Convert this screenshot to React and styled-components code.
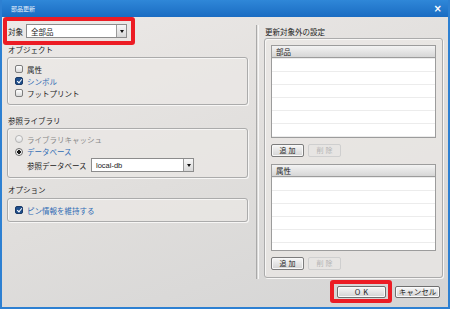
import styled, { createGlobalStyle } from "styled-components";

const GlobalStyle = createGlobalStyle`
  html, body {
    margin: 0;
    padding: 0;
    background: #ffffff;
  }
  body {
    font-family: "Noto Sans CJK JP", "Noto Sans", sans-serif;
  }
`;

const Window = styled.div`
  width: 450px;
  height: 309px;
  box-sizing: border-box;
  display: flex;
  flex-direction: column;
  border: 2px solid #2d80d2;
  border-top: none;
  overflow: hidden;
`;

const TitleBar = styled.div`
  height: 17px;
  margin: 0 -2px;
  flex-shrink: 0;
  display: flex;
  align-items: center;
  justify-content: space-between;
  padding: 0 8px 0 11px;
  background: linear-gradient(#2f87d8, #1a6cc2);
  color: #e9f2fb;
  font-size: 6px;
`;

const Close = styled.span`
  font-family: "DejaVu Sans", sans-serif;
  font-size: 10px;
  font-weight: bold;
  color: #ffffff;
`;

const Body = styled.div`
  flex: 1;
  display: flex;
  flex-direction: column;
  background: linear-gradient(160deg, #ece9e7 0%, #e0dedc 50%, #d4d4d4 100%);
  font-size: 7.5px;
  color: #222;
`;

const Main = styled.div`
  height: 262px;
  display: flex;
`;

const LeftCol = styled.div`
  width: 241px;
  margin-left: 5px;
  display: flex;
  flex-direction: column;
`;

const TargetRow = styled.div`
  width: 132px;
  height: 28px;
  box-sizing: border-box;
  margin-left: -4px;
  border: 4px solid #ec1c24;
  border-radius: 3px;
  display: flex;
  align-items: center;
  gap: 3px;
  padding-left: 1px;
`;

const Combo = styled.div`
  width: ${(p) => p.w}px;
  height: 14px;
  box-sizing: border-box;
  border: 1px solid #8c8c8c;
  background: #ffffff;
  display: flex;
  align-items: center;
  justify-content: space-between;
  padding-left: 4px;
  font-family: ${(p) => (p.latin ? '"Liberation Sans", "Noto Sans CJK JP", sans-serif' : "inherit")};
`;

const DropButton = styled.div`
  width: 10px;
  height: 12px;
  box-sizing: border-box;
  border-left: 1px solid #9a9a9a;
  background: linear-gradient(#f6f6f6, #d8d8d8);
  display: flex;
  align-items: center;
  justify-content: center;
  &::after {
    content: "";
    border-left: 2.5px solid transparent;
    border-right: 2.5px solid transparent;
    border-top: 3px solid #111;
  }
`;

const SectionLabel = styled.div`
  height: 10px;
  line-height: 10px;
  margin-top: ${(p) => p.mt || 0}px;
  margin-bottom: ${(p) => p.mb || 2}px;
  padding-left: ${(p) => p.pl || 1}px;
`;

const Group = styled.div`
  height: ${(p) => p.h}px;
  box-sizing: border-box;
  border: 1px solid #ababab;
  border-radius: 3px;
  box-shadow: inset 1px 1px 0 #f7f6f5, 1px 1px 0 #f7f6f5;
  background: rgba(235, 232, 230, 0.7);
  padding: ${(p) => p.pad || "4px 7px"};
  display: flex;
  flex-direction: column;
`;

const OptionRow = styled.div`
  height: ${(p) => p.h || 13}px;
  display: flex;
  align-items: center;
  gap: 4px;
  padding-left: ${(p) => p.indent || 0}px;
  color: ${(p) => (p.tone === "blue" ? "#2e6bb4" : p.tone === "gray" ? "#8a8a8a" : "#222")};
`;

const CheckBox = styled.span`
  width: 8px;
  height: 8px;
  box-sizing: border-box;
  border: 1px solid ${(p) => (p.on ? "#1b3a66" : "#7d7d7d")};
  border-radius: 2px;
  background: ${(p) => (p.on ? "#1f4f8c" : "linear-gradient(#ffffff, #d9d9d9)")};
  position: relative;
  &::after {
    content: "";
    display: ${(p) => (p.on ? "block" : "none")};
    position: absolute;
    left: 1.5px;
    top: 0px;
    width: 2px;
    height: 4px;
    border-right: 1.3px solid #fff;
    border-bottom: 1.3px solid #fff;
    transform: rotate(40deg);
  }
`;

const Radio = styled.span`
  width: 8px;
  height: 8px;
  box-sizing: border-box;
  border-radius: 50%;
  border: 1px solid ${(p) => (p.on ? "#6d6d6d" : "#b4b4b4")};
  background: ${(p) =>
    p.on ? "radial-gradient(circle, #1a1a1a 0 1.6px, #f2f2f2 2px)" : "linear-gradient(#fafafa, #e0e0e0)"};
`;

const DbLabel = styled.span`
  width: 60px;
  color: #222;
`;

const Separator = styled.div`
  width: 1px;
  margin: 8px 0 0 8px;
  height: 254px;
  border-left: 1px solid #a9a9a9;
  border-right: 1px solid #f7f7f7;
`;

const RightCol = styled.div`
  width: 179px;
  margin-left: 5px;
  display: flex;
  flex-direction: column;
`;

const Table = styled.div`
  height: ${(p) => p.h}px;
  box-sizing: border-box;
  border: 1px solid #9c9c9c;
  background: repeating-linear-gradient(
    #ffffff 0px,
    #ffffff 12px,
    #ececec 12px,
    #ececec 13px
  );
  display: flex;
  flex-direction: column;
`;

const TableHead = styled.div`
  height: 12px;
  flex-shrink: 0;
  box-sizing: border-box;
  border-bottom: 1px solid #9c9c9c;
  background: linear-gradient(#f3f3f3, #d6d6d6);
  padding-left: 4px;
  line-height: 11px;
`;

const ButtonRow = styled.div`
  display: flex;
  gap: 4px;
  margin: 6px 0 7px;
`;

const SmallButton = styled.button`
  width: ${(p) => p.w || 33}px;
  height: 13px;
  padding: 0;
  box-sizing: border-box;
  font-family: inherit;
  font-size: 7px;
  letter-spacing: 2px;
  text-indent: 2px;
  line-height: 11px;
  border-radius: 2px;
  border: 1px solid ${(p) => (p.disabled ? "#cfcfcf" : "#7c7c7c")};
  background: ${(p) => (p.disabled ? "#e7e5e3" : "linear-gradient(#f7f7f7, #d4d4d4)")};
  color: ${(p) => (p.disabled ? "#b4b4b4" : "#222")};
  box-shadow: ${(p) => (p.disabled ? "none" : "inset 0 0 0 1px #f8f8f8")};
`;

const Footer = styled.div`
  display: flex;
  justify-content: flex-end;
  align-items: center;
  gap: 3px;
  padding: 1px 8px 0 0;
  height: 23px;
`;

const Highlight = styled.div`
  border: 4px solid #ec1c24;
  border-radius: 3px;
  padding: 2px 2px 1px 3px;
  display: flex;
`;

const DialogButton = styled.button`
  width: ${(p) => p.w}px;
  height: 12px;
  padding: 0;
  box-sizing: border-box;
  font-family: inherit;
  font-size: 7.5px;
  line-height: 10px;
  letter-spacing: ${(p) => (p.spaced ? "3px" : "0")};
  text-indent: ${(p) => (p.spaced ? "3px" : "0")};
  border-radius: 2px;
  border: 1px solid #6f6f6f;
  background: linear-gradient(#f8f8f8, #d2d2d2);
  box-shadow: inset 0 0 0 1px #fafafa;
  color: #222;
`;

const App = () => {
  return (
    <>
      <GlobalStyle />
      <Window>
        <TitleBar>
          <span>部品更新</span>
          <Close>×</Close>
        </TitleBar>
        <Body>
          <Main>
            <LeftCol>
              <TargetRow>
                <span>対象</span>
                <Combo w={101}>
                  全部品
                  <DropButton />
                </Combo>
              </TargetRow>
              <SectionLabel>オブジェクト</SectionLabel>
              <Group h={48} pad="5px 7px">
                <OptionRow>
                  <CheckBox />
                  属性
                </OptionRow>
                <OptionRow tone="blue">
                  <CheckBox on />
                  シンボル
                </OptionRow>
                <OptionRow>
                  <CheckBox />
                  フットプリント
                </OptionRow>
              </Group>
              <SectionLabel mt={11}>参照ライブラリ</SectionLabel>
              <Group h={50} pad="4px 7px">
                <OptionRow tone="gray">
                  <Radio />
                  ライブラリキャッシュ
                </OptionRow>
                <OptionRow tone="blue">
                  <Radio on />
                  データベース
                </OptionRow>
                <OptionRow h={16} indent={12}>
                  <DbLabel>参照データベース</DbLabel>
                  <Combo w={103} latin>
                    local-db
                    <DropButton />
                  </Combo>
                </OptionRow>
              </Group>
              <SectionLabel mt={7} mb={3}>
                オプション
              </SectionLabel>
              <Group h={24} pad="5px 7px">
                <OptionRow tone="blue">
                  <CheckBox on />
                  ピン情報を維持する
                </OptionRow>
              </Group>
            </LeftCol>
            <Separator />
            <RightCol>
              <SectionLabel mt={10} mb={1} pl={0}>
                更新対象外の設定
              </SectionLabel>
              <Group h={240} pad="6px 6px 0">
                <Table h={95}>
                  <TableHead>部品</TableHead>
                </Table>
                <ButtonRow>
                  <SmallButton>追加</SmallButton>
                  <SmallButton disabled>削除</SmallButton>
                </ButtonRow>
                <Table h={88}>
                  <TableHead>属性</TableHead>
                </Table>
                <ButtonRow>
                  <SmallButton>追加</SmallButton>
                  <SmallButton disabled>削除</SmallButton>
                </ButtonRow>
              </Group>
            </RightCol>
          </Main>
          <Footer>
            <Highlight>
              <DialogButton w={49} spaced>
                OK
              </DialogButton>
            </Highlight>
            <DialogButton w={45}>キャンセル</DialogButton>
          </Footer>
        </Body>
      </Window>
    </>
  );
};

export default App;
